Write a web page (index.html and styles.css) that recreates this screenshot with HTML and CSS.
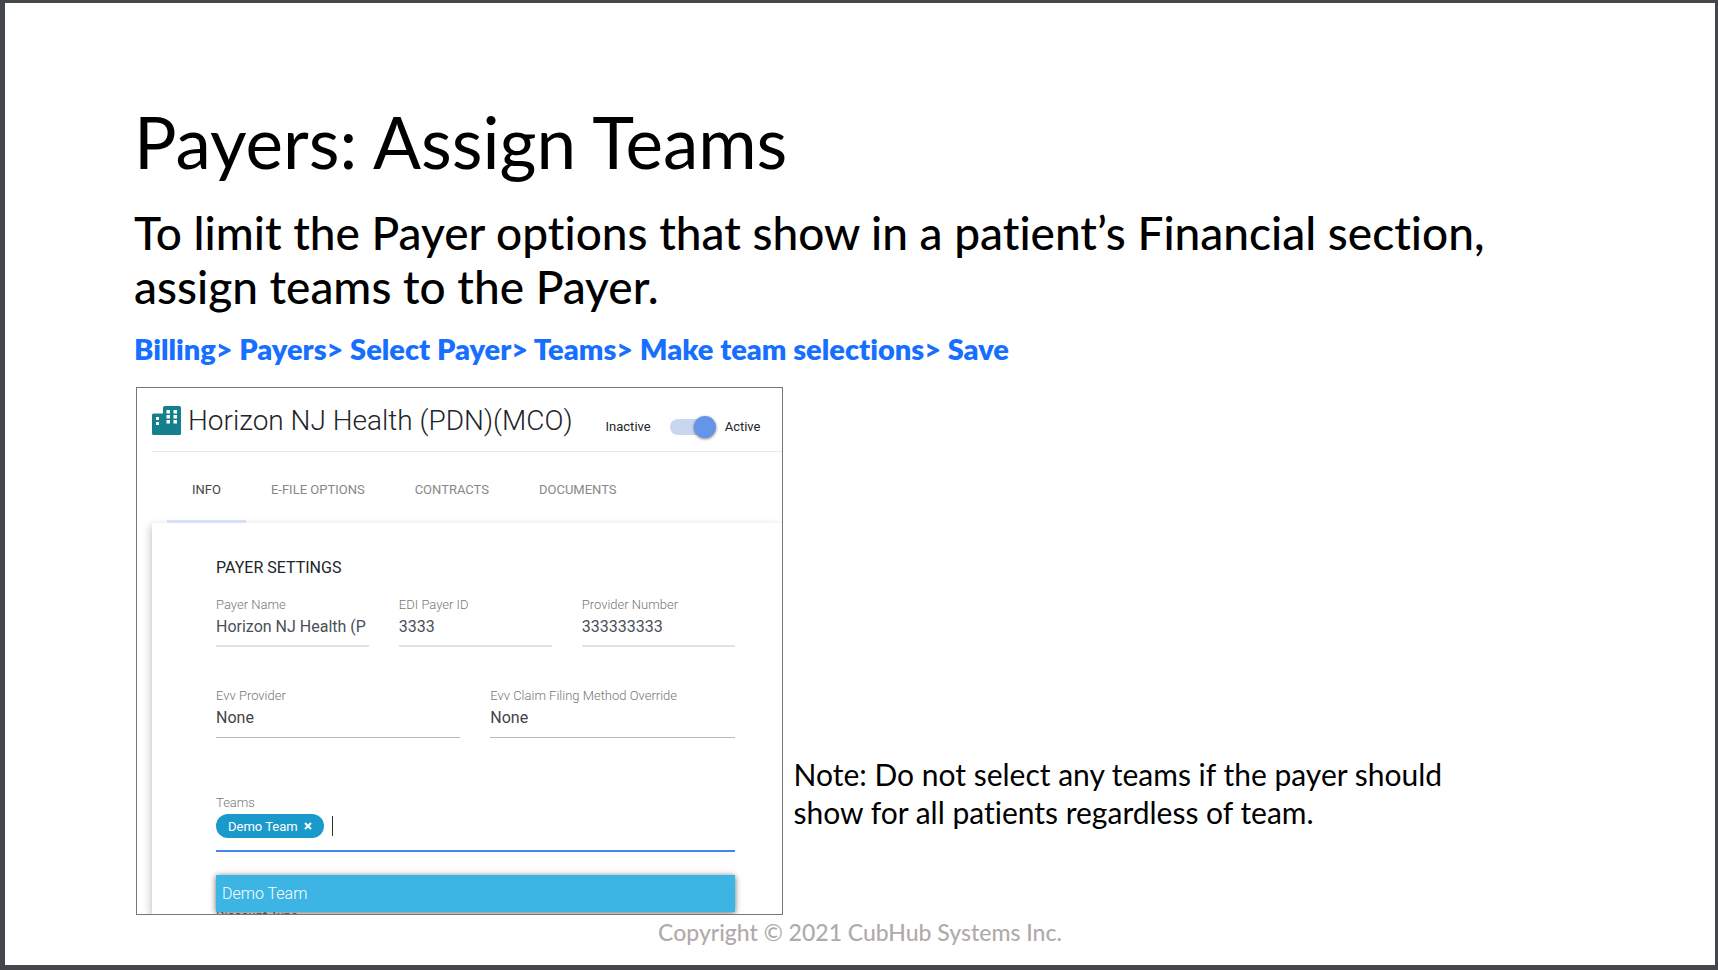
FILE: index.html
```html
<!DOCTYPE html>
<html lang="en">
<head>
<meta charset="utf-8">
<meta name="viewport" content="width=device-width, initial-scale=1">
<title>Payers: Assign Teams</title>
<link rel="stylesheet" href="styles.css">
</head>
<body>
<main class="slide">
  <h1 class="slide-title">Payers: Assign Teams</h1>
  <p class="slide-lead">To limit the Payer options that show in a patient’s Financial section, assign teams to the Payer.</p>
  <p class="slide-path">Billing&gt; Payers&gt; Select Payer&gt; Teams&gt; Make team selections&gt; Save</p>

  <div class="stage">
    <section class="card">
      <header class="card-head">
        <svg class="card-icon" viewBox="0 0 29 29" aria-hidden="true">
          <path fill="#15808d" d="M1.500 7.500H11V2q0-2 2-2h14q2 0 2 2v25.500q0 1.500-1.500 1.500h-26Q0 29 0 27.500V9q0-1.500 1.500-1.500z"/>
          <path fill="#fff" d="M4 11h3v3H4zM4 16h3v3H4zM14.500 4h3.500v3.500h-3.500zM21.500 4H25v3.500h-3.500zM14.500 9h3.500v3.500h-3.500zM21.500 9H25v3.500h-3.500zM14.500 14h3.500v3.500h-3.500zM21.500 14H25v3.500h-3.500z"/>
        </svg>
        <h2 class="card-title">Horizon NJ Health (PDN)(MCO)</h2>
        <label class="switch">
          <span>Inactive</span>
          <input class="switch-input" type="checkbox" role="switch" checked>
          <span>Active</span>
        </label>
      </header>

      <nav class="tabs">
        <button class="tab tab-active" type="button">INFO</button>
        <button class="tab" type="button">E-FILE OPTIONS</button>
        <button class="tab" type="button">CONTRACTS</button>
        <button class="tab" type="button">DOCUMENTS</button>
      </nav>

      <form class="panel">
        <h3 class="panel-title">PAYER SETTINGS</h3>
        <div class="row row-three">
          <div class="field">
            <label for="payer-name">Payer Name</label>
            <input class="control" id="payer-name" type="text" value="Horizon NJ Health (P">
          </div>
          <div class="field">
            <label for="edi-id">EDI Payer ID</label>
            <input class="control" id="edi-id" type="text" value="3333">
          </div>
          <div class="field">
            <label for="provider-number">Provider Number</label>
            <input class="control" id="provider-number" type="text" value="333333333">
          </div>
        </div>
        <div class="row row-two">
          <div class="field">
            <label for="evv-provider">Evv Provider</label>
            <select class="control control-select" id="evv-provider"><option>None</option></select>
          </div>
          <div class="field">
            <label for="evv-method">Evv Claim Filing Method Override</label>
            <select class="control control-select" id="evv-method"><option>None</option></select>
          </div>
        </div>
        <div class="teams">
          <label for="teams-input">Teams</label>
          <div class="teams-box">
            <span class="chip">Demo Team
              <button class="chip-remove" type="button" aria-label="Remove Demo Team">
                <svg viewBox="0 0 8 8" aria-hidden="true"><path d="M1 1l6 6M7 1L1 7"/></svg>
              </button>
            </span>
            <span class="caret"></span>
            <input class="teams-input" id="teams-input" type="text">
          </div>
        </div>
        <button class="option" type="button">Demo Team</button>
        <div class="next-field">Discount Type</div>
      </form>
    </section>

    <p class="note">Note: Do not select any teams if the payer should show for all patients regardless of team.</p>
  </div>

  <footer class="copyright">Copyright © 2021 CubHub Systems Inc.</footer>
</main>
</body>
</html>
```

FILE: styles.css
```css
*, *::before, *::after { box-sizing: border-box; }

body {
  margin: 0;
  background: #3f4246;
  font-family: Lato, "Liberation Sans", sans-serif;
  font-variant-ligatures: none;
  color: #000;
}

h1, h2, h3, p { margin: 0; font-weight: 400; }

button, input, select { font: inherit; color: inherit; }

.slide {
  min-height: 100vh;
  padding: 97px 129px 0;
  border: solid #43474b;
  border-width: 3px 3px 5px 5px;
  background: #fff;
}

.slide-title { font-size: 71px; line-height: 84px; }

.slide-lead {
  margin-top: 22px;
  font-size: 46px;
  font-weight: 500;
  line-height: 54px;
}

.slide-path {
  margin-top: 17px;
  color: #176fff;
  font-size: 29px;
  font-weight: 800;
  line-height: 36px;
}

.stage {
  display: grid;
  grid-template-columns: 647fr 793fr;
  gap: 11px;
  margin-top: 20px;
  padding-left: 2px;
}

.card {
  overflow: hidden;
  border: 1px solid #777;
  background: #fff;
  color: #212529;
  font-family: Roboto, "Liberation Sans", sans-serif;
}

.card-head {
  display: flex;
  align-items: center;
  height: 64px;
  margin-left: 15px;
  padding-top: 2px;
  border-bottom: 1px solid #e8e8e8;
}

.card-icon { flex: none; width: 29px; height: 29px; }

.card-title {
  margin-left: 7px;
  font-size: 28px;
  font-weight: 300;
  line-height: 36px;
  white-space: nowrap;
}

.switch {
  display: flex;
  align-items: center;
  margin: 12px 0 0 33px;
  font-size: 13px;
  line-height: 16px;
}

.switch-input {
  appearance: none;
  position: relative;
  width: 44px;
  height: 16px;
  margin: 0 11px 0 19px;
  border-radius: 8px;
  background: #c8d6f0;
}

.switch-input::before {
  content: "";
  position: absolute;
  top: -3px;
  right: -2px;
  width: 22px;
  height: 22px;
  border-radius: 50%;
  background: #6495e8;
  box-shadow: 0 1px 3px rgba(0, 0, 0, .5);
}

.tabs { display: flex; position: relative; z-index: 1; padding: 0 30px; }

.tab {
  height: 71px;
  padding: 6px 25px 0;
  border: 0;
  border-bottom: 3px solid transparent;
  background: none;
  color: #888;
  font-size: 13px;
}

.tab-active { border-color: #d5e1f5; color: #444; }

.panel {
  margin-left: 15px;
  padding: 33px 47px 0 64px;
  box-shadow: -1px 3px 8px rgba(0, 0, 0, .25);
}

.panel-title { color: #212529; font-size: 16px; line-height: 24px; }

.row { display: grid; gap: 30px; }

.row-three { grid-template-columns: repeat(3, 1fr); margin-top: 16px; }

.row-two { grid-template-columns: repeat(2, 1fr); margin-top: 40px; }

.field { min-width: 0; }

.field label, .teams label {
  display: block;
  color: #777;
  font-size: 13px;
  font-weight: 300;
  line-height: 18px;
}

.control {
  display: block;
  width: 100%;
  height: 33px;
  padding: 0 0 7px;
  border: 0;
  border-bottom: 2px solid #dfe1e8;
  border-radius: 0;
  outline: 0;
  background: none;
  color: #495057;
  font-size: 16px;
}

.control-select {
  appearance: none;
  border-bottom: 1px solid #bbb;
  color: #444;
}

.teams { margin-top: 56px; border-bottom: 2px solid #4386ee; }

.teams-box {
  display: flex;
  align-items: center;
  height: 38px;
  padding: 2px 0 12px;
}

.chip {
  display: flex;
  align-items: center;
  gap: 6px;
  height: 24px;
  padding: 0 12px;
  border-radius: 12px;
  background: #1a9acb;
  color: #fff;
  font-size: 13px;
  white-space: nowrap;
}

.chip-remove {
  display: flex;
  padding: 0;
  border: 0;
  background: none;
}

.chip-remove svg {
  width: 8px;
  height: 8px;
  fill: none;
  stroke: currentColor;
  stroke-width: 2;
}

.caret { width: 1px; height: 20px; margin-left: 8px; background: #333; }

.teams-input {
  flex: 1;
  min-width: 0;
  border: 0;
  outline: 0;
  background: none;
  font-size: 13px;
}

.option {
  display: block;
  position: relative;
  width: 100%;
  height: 37px;
  margin-top: 23px;
  padding: 0 6px;
  border: 0;
  background: #3cb5e5;
  box-shadow: 0 1px 6px rgba(0, 0, 0, .6);
  color: #fff;
  font-size: 16px;
  font-weight: 300;
  text-align: left;
}

.next-field {
  height: 2px;
  overflow: hidden;
  color: #666;
  font-size: 13px;
  line-height: 8px;
}

.note {
  align-self: end;
  max-width: 680px;
  padding-bottom: 84px;
  font-size: 30px;
  line-height: 38px;
}

.copyright {
  margin-top: 3px;
  color: #afabab;
  font-size: 23px;
  font-weight: 500;
  line-height: 28px;
  text-align: center;
}
```
